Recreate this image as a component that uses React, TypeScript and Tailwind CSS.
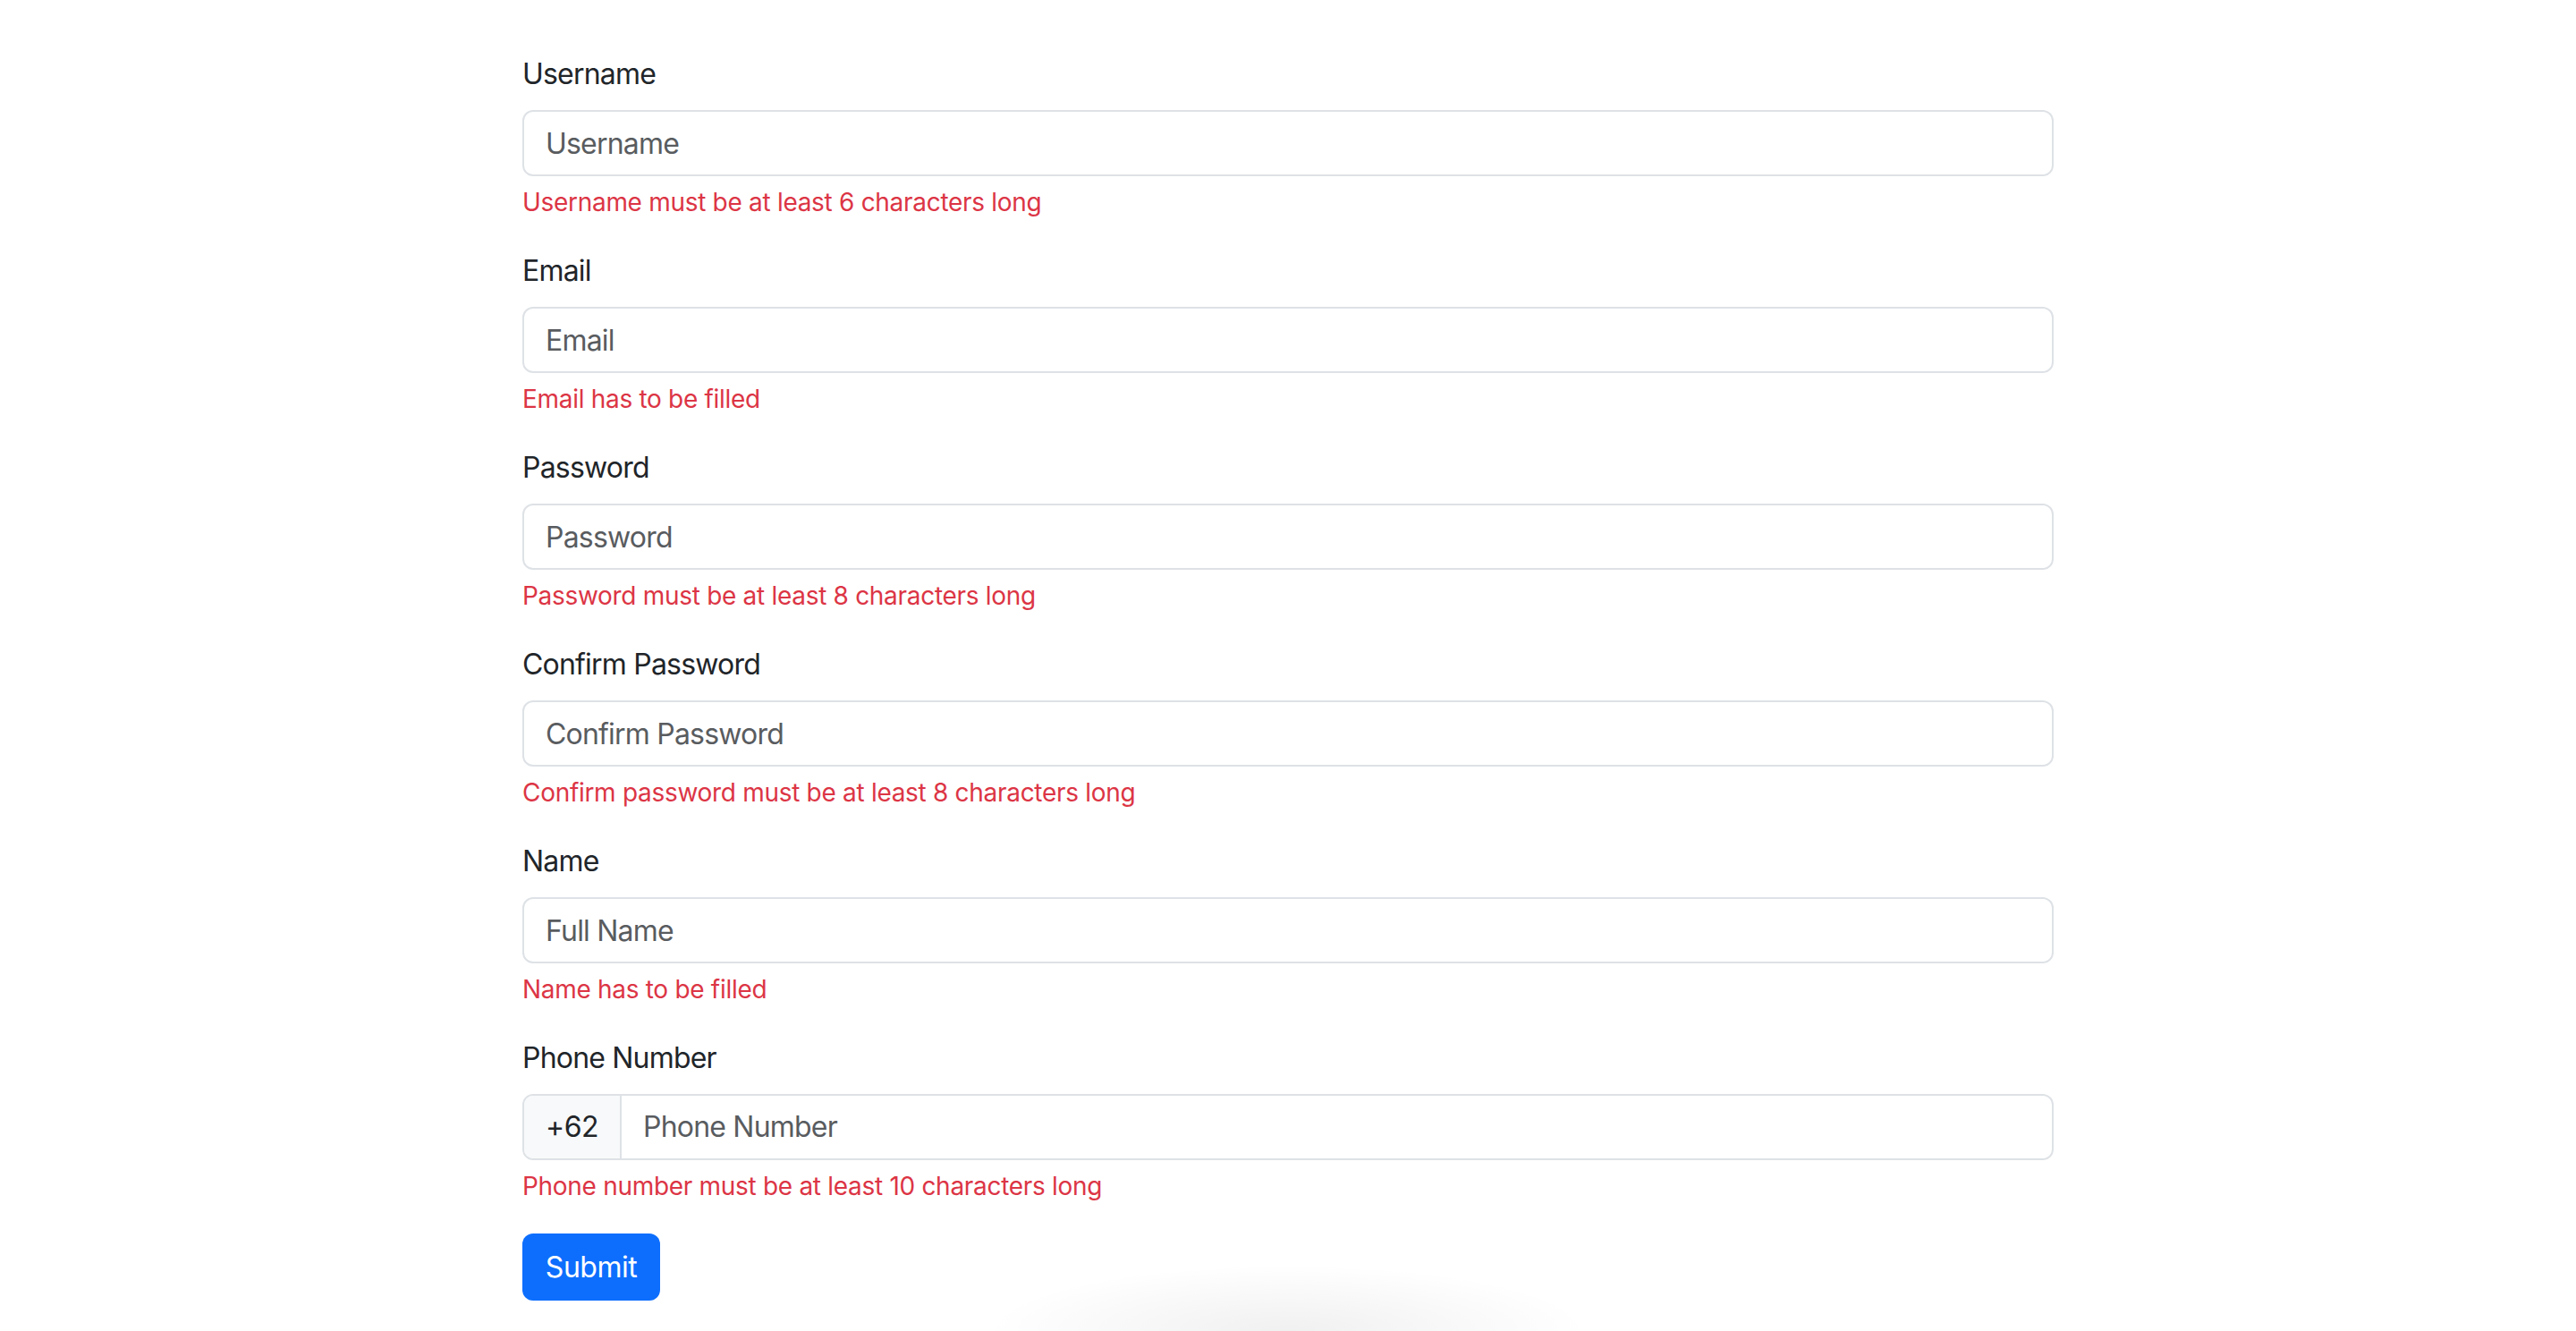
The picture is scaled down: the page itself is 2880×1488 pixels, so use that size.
import React from "react";

const fields = [
  { label: "Username", placeholder: "Username", error: "Username must be at least 6 characters long" },
  { label: "Email", placeholder: "Email", error: "Email has to be filled" },
  { label: "Password", placeholder: "Password", error: "Password must be at least 8 characters long" },
  { label: "Confirm Password", placeholder: "Confirm Password", error: "Confirm password must be at least 8 characters long" },
  { label: "Name", placeholder: "Full Name", error: "Name has to be filled" },
];

export default function App() {
  return (
    <div
      className="relative h-[1488px] overflow-hidden bg-white text-[#212529]"
      style={{ fontFamily: "Inter, 'Noto Sans', sans-serif" }}
    >
      <form className="mx-auto w-[1712px] pt-[59px]">
        {fields.map((f) => (
          <div key={f.label} className="mb-[32px]">
            <label className="mb-[16px] block text-[32px] leading-[48px] tracking-[-0.8px]">{f.label}</label>
            <input
              placeholder={f.placeholder}
              className="block h-[74px] w-full rounded-[12px] border-2 border-[#dee2e6] px-[24px] text-[32px] tracking-[-0.8px] outline-none placeholder:text-[#595c5f]"
            />
            <div className="mt-[8px] text-[28px] leading-[42px] tracking-[-0.3px] text-[#dc3545]">{f.error}</div>
          </div>
        ))}

        <div className="mb-[32px]">
          <label className="mb-[16px] block text-[32px] leading-[48px] tracking-[-0.8px]">Phone Number</label>
          <div className="flex h-[74px] w-full rounded-[12px] border-2 border-[#dee2e6]">
            <span className="flex items-center rounded-l-[10px] border-r-2 border-[#dee2e6] bg-[#f8f9fa] px-[24px] text-[32px] tracking-[-0.5px]">
              +62
            </span>
            <input
              placeholder="Phone Number"
              className="min-w-0 flex-1 rounded-r-[10px] px-[24px] text-[32px] tracking-[-0.8px] outline-none placeholder:text-[#595c5f]"
            />
          </div>
          <div className="mt-[8px] text-[28px] leading-[42px] tracking-[-0.3px] text-[#dc3545]">
            Phone number must be at least 10 characters long
          </div>
        </div>

        <button
          type="submit"
          className="h-[75px] w-[154px] rounded-[12px] bg-[#0d6efd] text-[32px] tracking-[-0.5px] text-white"
        >
          Submit
        </button>
      </form>

      {/* soft shadow at the bottom edge */}
      <div className="pointer-events-none absolute bottom-0 left-1/2 h-[75px] w-[680px] -translate-x-1/2 bg-[radial-gradient(ellipse_at_bottom,rgba(0,0,0,0.06),transparent_70%)]" />
    </div>
  );
}
